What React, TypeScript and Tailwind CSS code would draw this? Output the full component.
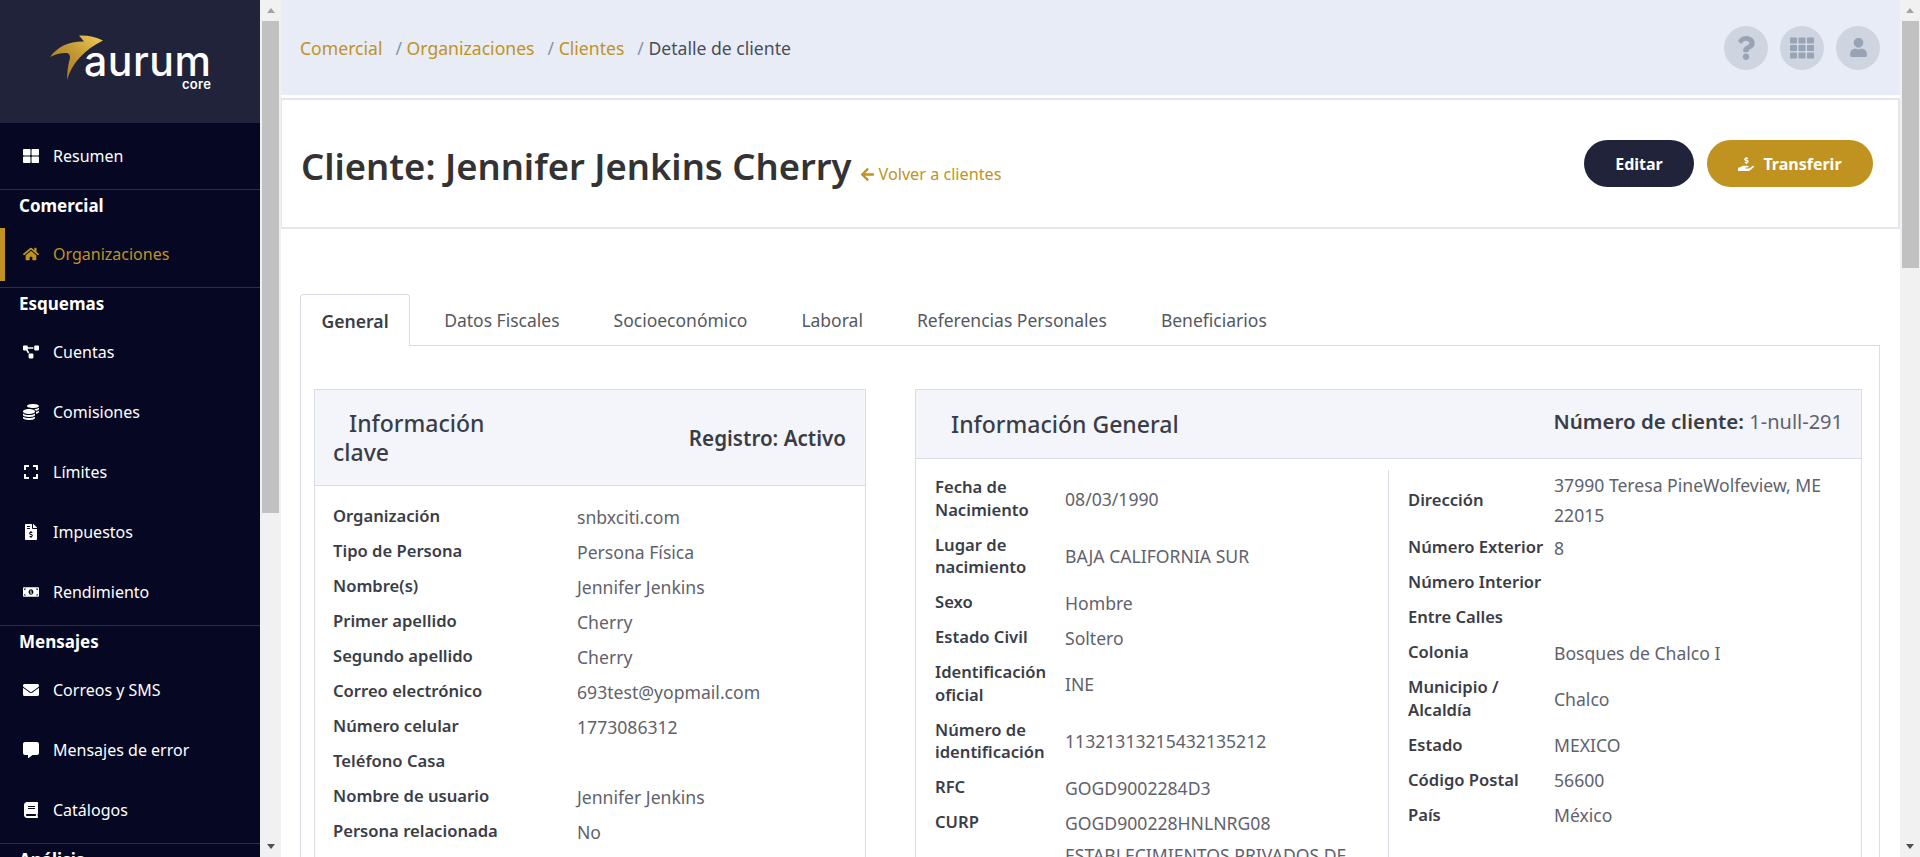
import type { ReactNode } from "react";
import {
  FaArrowLeft,
  FaBook,
  FaCoins,
  FaCommentAlt,
  FaEnvelope,
  FaExpand,
  FaFileInvoiceDollar,
  FaHandHoldingUsd,
  FaHome,
  FaMoneyBillAlt,
  FaProjectDiagram,
  FaQuestion,
  FaTh,
  FaThLarge,
  FaUser,
} from "react-icons/fa";

type Row = { label: ReactNode; value?: ReactNode };

const keyRows: Row[] = [
  { label: "Organización", value: "snbxciti.com" },
  { label: "Tipo de Persona", value: "Persona Física" },
  { label: "Nombre(s)", value: "Jennifer Jenkins" },
  { label: "Primer apellido", value: "Cherry" },
  { label: "Segundo apellido", value: "Cherry" },
  { label: "Correo electrónico", value: "693test@yopmail.com" },
  { label: "Número celular", value: "1773086312" },
  { label: "Teléfono Casa" },
  { label: "Nombre de usuario", value: "Jennifer Jenkins" },
  { label: "Persona relacionada", value: "No" },
];

const personalRows: Row[] = [
  { label: "Fecha de Nacimiento", value: "08/03/1990" },
  { label: "Lugar de nacimiento", value: "BAJA CALIFORNIA SUR" },
  { label: "Sexo", value: "Hombre" },
  { label: "Estado Civil", value: "Soltero" },
  { label: "Identificación oficial", value: "INE" },
  { label: "Número de identificación", value: "11321313215432135212" },
  { label: "RFC", value: "GOGD9002284D3" },
  { label: "CURP", value: "GOGD900228HNLNRG08" },
  { label: "Actividad", value: "ESTABLECIMIENTOS PRIVADOS DE INSTRUCCIÓN" },
];

const addressRows: Row[] = [
  { label: "Dirección", value: "37990 Teresa PineWolfeview, ME 22015" },
  { label: "Número Exterior", value: "8" },
  { label: "Número Interior" },
  { label: "Entre Calles" },
  { label: "Colonia", value: "Bosques de Chalco I" },
  { label: "Municipio / Alcaldía", value: "Chalco" },
  { label: "Estado", value: "MEXICO" },
  { label: "Código Postal", value: "56600" },
  { label: "País", value: "México" },
];

const tabs = ["Datos Fiscales", "Socioeconómico", "Laboral", "Referencias Personales", "Beneficiarios"];

function NavItem({ icon, label, active }: { icon: ReactNode; label: string; active?: boolean }) {
  return (
    <div
      className={`flex h-[60px] items-center pb-[6px] text-[16px] ${
        active ? "text-[#c09320]" : "text-white"
      }`}
    >
      <span className={`h-[53px] w-[5px] shrink-0 ${active ? "bg-[#c09320]" : ""}`} />
      <span className="flex w-[48px] shrink-0 justify-center pr-[8px] pl-[11px] text-[16px]">{icon}</span>
      <span>{label}</span>
    </div>
  );
}

function NavSection({ title }: { title: string }) {
  return (
    <div className="flex h-[38px] items-center border-t border-[#2b2d49] pb-[5px] pl-[19px] text-[17px] font-bold text-white">
      {title}
    </div>
  );
}

function Sidebar() {
  return (
    <aside className="h-full w-[260px] shrink-0 overflow-hidden bg-[#050723]">
      <div className="flex h-[123px] justify-center bg-[#20233a]">
        <div className="relative h-[123px] w-[260px]">
          <svg className="absolute top-0 left-0" width="120" height="90" viewBox="0 0 120 90">
            <defs>
              <linearGradient id="gold" x1="0" y1="1" x2="1" y2="0">
                <stop offset="0" stopColor="#9a6f1c" />
                <stop offset="0.55" stopColor="#c39a35" />
                <stop offset="1" stopColor="#f0cc5c" />
              </linearGradient>
            </defs>
            <path
              d="M103 40.5C95 36.5 87 35 79 35.5L84 41.5C70 41 58 46 50 57C56 54 62 52.5 67 53C69 53.5 70 55 70 58C68 65 67 72 67 80C72 63 84 50 103 40.5Z"
              fill="url(#gold)"
            />
          </svg>
          <span className="absolute top-[47px] left-[84px] font-['Inter',sans-serif] text-[41px] leading-[28px] font-medium tracking-[0.5px] text-white">
            aurum
          </span>
          <span className="absolute top-[75px] left-[182px] font-['Inter',sans-serif] text-[13px] leading-[18px] font-semibold tracking-[0.3px] text-white">
            core
          </span>
        </div>
      </div>
      <div className="h-[66px] pt-[6px]">
        <NavItem icon={<FaThLarge />} label="Resumen" />
      </div>
      <NavSection title="Comercial" />
      <NavItem icon={<FaHome />} label="Organizaciones" active />
      <NavSection title="Esquemas" />
      <NavItem icon={<FaProjectDiagram />} label="Cuentas" />
      <NavItem icon={<FaCoins />} label="Comisiones" />
      <NavItem icon={<FaExpand />} label="Límites" />
      <NavItem icon={<FaFileInvoiceDollar />} label="Impuestos" />
      <NavItem icon={<FaMoneyBillAlt />} label="Rendimiento" />
      <NavSection title="Mensajes" />
      <NavItem icon={<FaEnvelope />} label="Correos y SMS" />
      <NavItem icon={<FaCommentAlt />} label="Mensajes de error" />
      <NavItem icon={<FaBook />} label="Catálogos" />
      <NavSection title="Análisis" />
    </aside>
  );
}

// barra de scroll del navegador
function ScrollBar({ thumb, className }: { thumb: string; className: string }) {
  return (
    <div className={`flex h-full shrink-0 flex-col items-center bg-[#f1f1f1] ${className}`}>
      <div className="flex h-[21px] w-full shrink-0 items-center justify-center">
        <span className="h-0 w-0 border-x-[4px] border-b-[5px] border-x-transparent border-b-[#a3a3a3]" />
      </div>
      <div className={`w-[17px] shrink-0 bg-[#c1c1c1] ${thumb}`} />
      <div className="flex-1" />
      <div className="flex h-[21px] w-full shrink-0 items-center justify-center">
        <span className="h-0 w-0 border-x-[4px] border-t-[5px] border-x-transparent border-t-[#505050]" />
      </div>
    </div>
  );
}

function RoundIcon({ children }: { children: ReactNode }) {
  return (
    <span className="flex h-[44px] w-[44px] items-center justify-center rounded-full bg-[#ced4e0] text-[#98a3b5]">
      {children}
    </span>
  );
}

function TopBar() {
  return (
    <div className="flex h-[95px] items-center justify-between bg-[#e8ecf7] pr-[20px] pl-[19px]">
      <div className="flex pt-[2px] text-[17.6px] text-[#c09320]">
        <span>Comercial</span>
        <span className="ml-[13px] text-[#8a92a3]">/&nbsp;</span>
        <span>Organizaciones</span>
        <span className="ml-[13px] text-[#8a92a3]">/&nbsp;</span>
        <span>Clientes</span>
        <span className="ml-[13px] text-[#8a92a3]">/&nbsp;</span>
        <span className="text-[#4a4d58]">Detalle de cliente</span>
      </div>
      <div className="flex gap-[12px]">
        <RoundIcon>
          <FaQuestion className="text-[24px]" />
        </RoundIcon>
        <RoundIcon>
          <FaTh className="text-[24px]" />
        </RoundIcon>
        <RoundIcon>
          <FaUser className="text-[19px]" />
        </RoundIcon>
      </div>
    </div>
  );
}

function PageHeader() {
  return (
    <div className="mt-[3px] flex h-[131px] items-center justify-between border-y-2 border-r-2 border-l border-[#e4e6ee] pr-[25px] pl-[19px]">
      <div className="flex items-baseline pt-[5px]">
        <h1 className="text-[36.4px] leading-[48px] font-semibold text-[#333333]">Cliente: Jennifer Jenkins Cherry</h1>
        <a className="ml-[8px] flex translate-y-[2px] items-center gap-[4px] text-[16.2px] text-[#c09320]">
          <FaArrowLeft className="text-[15px]" />
          Volver a clientes
        </a>
      </div>
      <div className="flex gap-[13px]">
        <button className="h-[47px] w-[110px] rounded-full bg-[#20233a] text-[16px] font-bold text-white">
          Editar
        </button>
        <button className="flex h-[47px] w-[166px] items-center justify-center gap-[9px] rounded-full bg-[#c09320] text-[16px] font-bold text-white">
          <FaHandHoldingUsd className="text-[16px]" />
          Transferir
        </button>
      </div>
    </div>
  );
}

function Tabs() {
  return (
    <div className="flex h-[52px] border-b border-[#d9dde6]">
      <div className="z-10 mr-[7px] -mb-px flex items-center rounded-t-[4px] border border-b-0 border-[#d9dde6] bg-white px-[20.5px] pt-[1px] text-[17.6px] font-semibold text-[#3a3d46]">
        General
      </div>
      {tabs.map((t) => (
        <div key={t} className="flex items-center px-[27px] pt-[1px] text-[17.5px] text-[#555861]">
          {t}
        </div>
      ))}
    </div>
  );
}

function InfoRow({ row, labelClass }: { row: Row; labelClass: string }) {
  return (
    <div className="flex min-h-[35px] items-center">
      <div className={`shrink-0 py-[6px] text-[16.6px] leading-[22.75px] font-semibold text-[#3a3d46] ${labelClass}`}>
        {row.label}
      </div>
      {row.value && <div className="text-[17.6px] leading-[30px] text-[#5f626b]">{row.value}</div>}
    </div>
  );
}

function KeyInfoCard() {
  return (
    <section className="w-[552px] shrink-0 border border-[#d9dde6]">
      <div className="flex h-[96px] items-center justify-between border-b border-[#d9dde6] bg-[#f3f5fb] pr-[19px] pl-[18px]">
        <h4 className="w-[190px] pt-[1px] indent-[16px] text-[23px] leading-[29px] font-medium text-[#3a3d46]">
          Información clave
        </h4>
        <span className="pt-[1px] text-[20.6px] font-semibold text-[#3a3d46]">Registro: Activo</span>
      </div>
      <div className="px-[18px] pt-[13px] pb-[20px]">
        {keyRows.map((r, i) => (
          <InfoRow key={i} row={r} labelClass="w-[244px]" />
        ))}
      </div>
    </section>
  );
}

function GeneralInfoCard() {
  return (
    <section className="w-[947px] shrink-0 border border-[#d9dde6]">
      <div className="flex h-[69px] items-center justify-between border-b border-[#d9dde6] bg-[#f3f5fb] pr-[18px] pl-[35px]">
        <h4 className="text-[23px] leading-[29px] font-medium text-[#3a3d46]">Información General</h4>
        <span className="-mt-[5px] text-[20.5px] font-semibold text-[#3a3d46]">
          Número de cliente: <span className="text-[20px] font-normal text-[#5f626b]">1-null-291</span>
        </span>
      </div>
      <div className="flex pt-[11px]">
        <div className="w-[473px] shrink-0 border-r border-[#d9dde6] pl-[19px]">
          {personalRows.map((r, i) => (
            <InfoRow key={i} row={r} labelClass="w-[130px] pr-[4px]" />
          ))}
        </div>
        <div className="flex-1 pr-[20px] pl-[19px]">
          {addressRows.map((r, i) => (
            <InfoRow key={i} row={r} labelClass="w-[146px] pr-[4px]" />
          ))}
        </div>
      </div>
    </section>
  );
}

export default function App() {
  return (
    <div className="flex h-[857px] overflow-hidden bg-white font-['Noto_Sans',sans-serif]">
      <Sidebar />
      <ScrollBar thumb="h-[492px]" className="w-[21px]" />
      <main className="min-w-0 flex-1 overflow-hidden">
        <TopBar />
        <PageHeader />
        <div className="pt-[65px] pr-[20px] pl-[19px]">
          <Tabs />
          <div className="flex gap-[49px] border-x border-[#d9dde6] px-[13px] pt-[43px] pb-[20px]">
            <KeyInfoCard />
            <GeneralInfoCard />
          </div>
        </div>
      </main>
      <ScrollBar thumb="h-[247px]" className="w-[20px]" />
    </div>
  );
}
